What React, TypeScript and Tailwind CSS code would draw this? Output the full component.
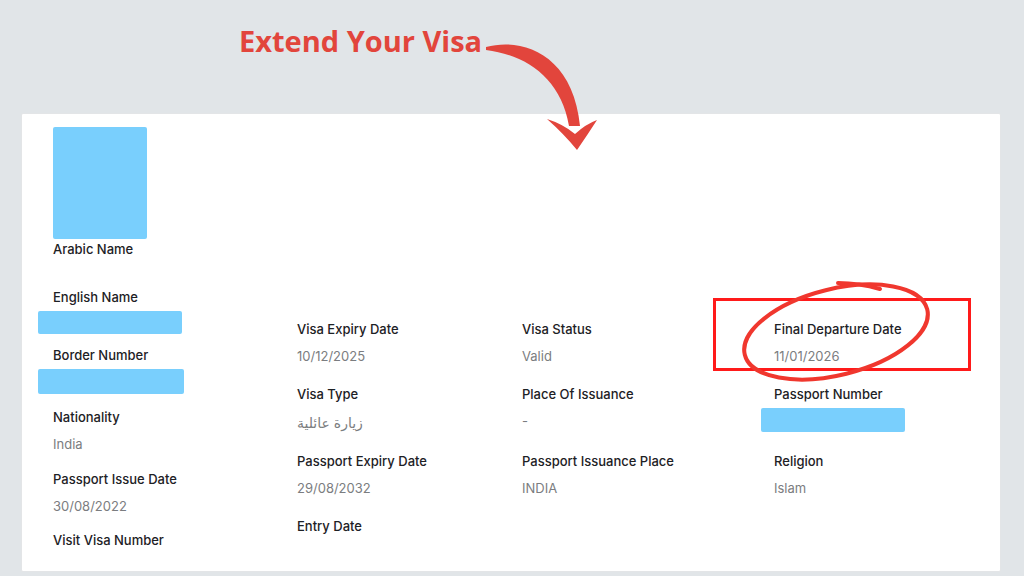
import React from "react";

interface Field {
	label: string;
	value?: string;
	masked?: boolean;
	rtl?: boolean;
}

const rows: Field[][] = [
	[
		{ label: "Visa Expiry Date", value: "10/12/2025" },
		{ label: "Visa Status", value: "Valid" },
		{ label: "Final Departure Date", value: "11/01/2026" },
	],
	[
		{ label: "Visa Type", value: "زيارة عائلية", rtl: true },
		{ label: "Place Of Issuance", value: "-" },
		{ label: "Passport Number", masked: true },
	],
	[
		{ label: "Passport Expiry Date", value: "29/08/2032" },
		{ label: "Passport Issuance Place", value: "INDIA" },
		{ label: "Religion", value: "Islam" },
	],
	[{ label: "Entry Date" }],
];

function Label({ children }: { children: React.ReactNode }) {
	return (
		<p className="text-[13px] leading-[20px] font-medium text-[#1d2125]">
			{children}
		</p>
	);
}

function Value({ children }: { children: React.ReactNode }) {
	return (
		<p className="mt-[7px] text-[13px] leading-[20px] text-[#7b7d80]">
			{children}
		</p>
	);
}

function Masked({ w, h, className = "" }: { w: string; h: string; className?: string }) {
	return <div className={`rounded-[2px] bg-[#79cffd] ${w} ${h} ${className}`} />;
}

export default function App() {
	return (
		<div
			className="relative w-[1024px] h-[576px] overflow-hidden bg-[#e1e5e8]"
			style={{ fontFamily: "Inter, 'DejaVu Sans', sans-serif" }}
		>
			{/* heading */}
			<div className="h-[113px] pt-[23px] pl-[239px]">
				<h1
					className="text-[29px] leading-[36px] font-bold text-[#e2453c]"
					style={{ fontFamily: "'Open Sans', sans-serif" }}
				>
					Extend Your Visa
				</h1>
			</div>

			{/* details card */}
			<div className="ml-[21px] mr-[23px] h-[459px] bg-white border border-[#e3e5e7] rounded-[2px] flex">
				{/* left column */}
				<div className="w-[275px] pl-[31px] pt-[13px]">
					<Masked w="w-[94px]" h="h-[112px]" />
					<Label>Arabic Name</Label>
					<div className="mt-[28px]">
						<Label>English Name</Label>
					</div>
					<Masked w="w-[144px]" h="h-[23px]" className="mt-[4px] -ml-[15px]" />
					<div className="mt-[11px]">
						<Label>Border Number</Label>
					</div>
					<Masked w="w-[146px]" h="h-[25px]" className="mt-[4px] -ml-[15px]" />
					<div className="mt-[13px]">
						<Label>Nationality</Label>
					</div>
					<Value>India</Value>
					<div className="mt-[15px]">
						<Label>Passport Issue Date</Label>
					</div>
					<Value>30/08/2022</Value>
					<div className="mt-[14px]">
						<Label>Visit Visa Number</Label>
					</div>
				</div>

				{/* right grid */}
				<div className="flex-1 pt-[205px] grid grid-cols-[225px_252px_1fr] gap-y-[18px] content-start">
					{rows.flat().map((f) => (
						<div key={f.label}>
							<Label>{f.label}</Label>
							{f.masked ? (
								<Masked w="w-[144px]" h="h-[24px]" className="mt-[4px] -ml-[13px]" />
							) : f.value ? (
								f.rtl ? (
									<p className="mt-[9px] text-[14px] leading-[20px] text-[#7b7d80]">
										<span dir="rtl" className="inline-block">
											{f.value}
										</span>
									</p>
								) : (
									<Value>{f.value}</Value>
								)
							) : null}
						</div>
					))}
				</div>
			</div>

			{/* annotation: rectangle */}
			<div className="absolute left-[713px] top-[298px] w-[258px] h-[73px] border-[3px] border-[#ff1a1a]" />

			{/* annotation: arrow + loop */}
			<svg
				className="absolute left-0 top-0 pointer-events-none"
				width="1024"
				height="576"
				viewBox="0 0 1024 576"
			>
				<path
					d="M486,47 C522,37 573,54 580,126 L569,126 C561,78 526,55 486,50 Z"
					fill="#e2453c"
				/>
				<path
					d="M547,119 Q563,124 575,134 Q586,124 597,120 Q588,134 577,150 Q564,134 547,119 Z"
					fill="#e2453c"
				/>
				<g fill="none" stroke="#f0372e" strokeWidth="4" strokeLinecap="round">
					<ellipse cx="836" cy="332" rx="94" ry="43" transform="rotate(-14 836 332)" />
					<path d="M838,283 C852,283 866,285 880,289" />
				</g>
			</svg>
		</div>
	);
}
